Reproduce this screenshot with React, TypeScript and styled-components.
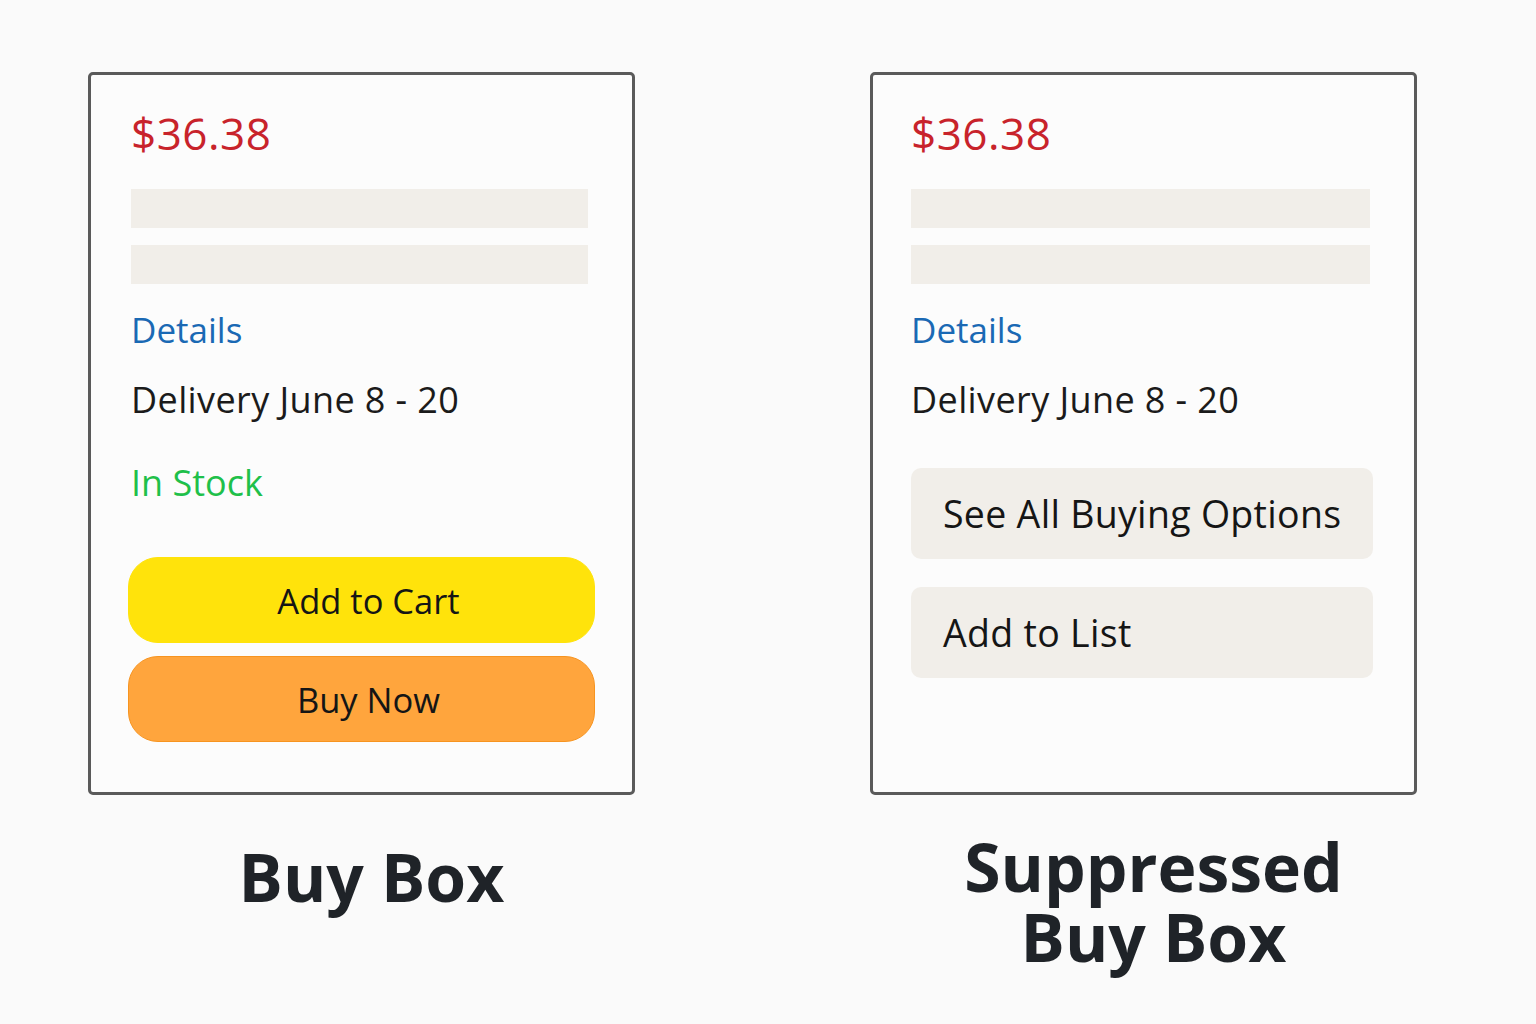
import styled, { createGlobalStyle } from 'styled-components'

const GlobalStyle = createGlobalStyle`
  html, body {
    margin: 0;
    padding: 0;
    background: #fafafa;
  }
  body {
    font-family: "Open Sans", "Noto Sans", sans-serif;
  }
`

const Page = styled.div`
  display: flex;
  gap: 235px;
  padding: 72px 0 0 88px;
  min-height: 1024px;
  box-sizing: border-box;
`

const Column = styled.div`
  display: flex;
  flex-direction: column;
  width: 547px;
`

const Card = styled.div<{ $pad: number }>`
  box-sizing: border-box;
  height: 723px;
  border: 3px solid #5a5a5a;
  border-radius: 5px;
  background: #fcfcfc;
  padding: 28px 0 0 ${p => p.$pad}px;
  display: flex;
  flex-direction: column;
  align-items: flex-start;
`

const Price = styled.div`
  color: #c8232b;
  font-size: 44px;
  line-height: 60px;
  letter-spacing: 0.5px;
`

const Bars = styled.div`
  display: flex;
  flex-direction: column;
  gap: 17px;
  margin-top: 26px;
`

const Bar = styled.div<{ $w: number }>`
  width: ${p => p.$w}px;
  height: 39px;
  background: #f1eee9;
`

const DetailsLink = styled.a`
  color: #1a69b4;
  font-size: 35px;
  line-height: 46px;
  margin-top: 23px;
  text-decoration: none;
`

const Delivery = styled.div`
  color: #1b1b1b;
  font-size: 36px;
  line-height: 46px;
  letter-spacing: 0.4px;
  margin-top: 24px;
`

const Stock = styled.div`
  color: #1fc04a;
  font-size: 36px;
  line-height: 46px;
  margin-top: 37px;
`

const Pill = styled.button<{ $bg: string; $border: string; $top: number }>`
  box-sizing: border-box;
  width: 467px;
  height: 86px;
  margin-left: -3px;
  margin-top: ${p => p.$top}px;
  padding: 0 0 0 14px;
  border-radius: 30px;
  background: ${p => p.$bg};
  border: 1px solid ${p => p.$border};
  color: #151515;
  font-family: inherit;
  font-size: 34.5px;
  cursor: pointer;
`

const Option = styled.button<{ $top: number }>`
  box-sizing: border-box;
  width: 462px;
  height: 91px;
  margin-top: ${p => p.$top}px;
  border: none;
  border-radius: 10px;
  background: #f1eee9;
  color: #151515;
  font-family: inherit;
  font-size: 37.5px;
  letter-spacing: 0.3px;
  text-align: left;
  padding: 0 0 0 32px;
  cursor: pointer;
`

const Label = styled.h2<{ $top: number }>`
  margin: ${p => p.$top}px 0 0 0;
  padding-left: 20px;
  text-align: center;
  color: #1f2328;
  font-size: 66px;
  font-weight: 700;
  line-height: 70px;
`

const App = () => {
  return (
    <>
      <GlobalStyle />
      <Page>
        <Column>
          <Card $pad={40}>
            <Price>$36.38</Price>
            <Bars>
              <Bar $w={457} />
              <Bar $w={457} />
            </Bars>
            <DetailsLink href="#">Details</DetailsLink>
            <Delivery>Delivery June 8 - 20</Delivery>
            <Stock>In Stock</Stock>
            <Pill $bg="#ffe30b" $border="#ffe30b" $top={51}>Add to Cart</Pill>
            <Pill $bg="#ffa53d" $border="#f79420" $top={13}>Buy Now</Pill>
          </Card>
          <Label $top={46}>Buy Box</Label>
        </Column>
        <Column>
          <Card $pad={38}>
            <Price>$36.38</Price>
            <Bars>
              <Bar $w={459} />
              <Bar $w={459} />
            </Bars>
            <DetailsLink href="#">Details</DetailsLink>
            <Delivery>Delivery June 8 - 20</Delivery>
            <Option $top={45}>See All Buying Options</Option>
            <Option $top={28}>Add to List</Option>
          </Card>
          <Label $top={36}>Suppressed<br />Buy Box</Label>
        </Column>
      </Page>
    </>
  )
}

export default App
